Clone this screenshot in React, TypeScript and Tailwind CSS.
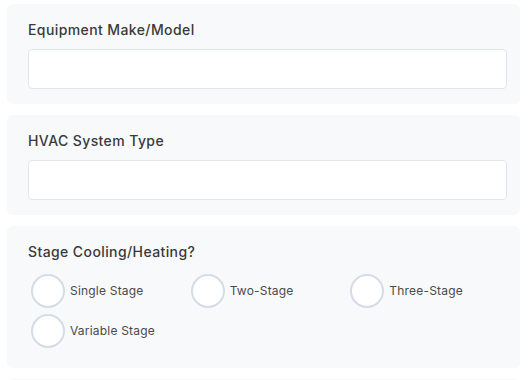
const options = ["Single Stage", "Two-Stage", "Three-Stage", "Variable Stage"];

function TextField({ label }: { label: string }) {
	return (
		<div className="rounded-md bg-[#f8f9fb] pl-[21px] pr-[13px] pt-4 pb-[15px]">
			<label className="block text-[14px] leading-5 font-medium tracking-[0.4px] text-[#3a3a3a]">{label}</label>
			<input type="text" className="mt-[9px] block h-[40px] w-full rounded bg-white border border-[#e2e6ec] outline-none" />
		</div>
	);
}

export default function App() {
	return (
		<div className="bg-white min-h-screen pt-1 pl-[7px] pr-[10px] flex flex-col gap-[11px]" style={{ fontFamily: "Inter, 'Open Sans', sans-serif" }}>
			<TextField label="Equipment Make/Model" />
			<TextField label="HVAC System Type" />
			<div className="rounded-md bg-[#f8f9fb] pl-[21px] pr-[13px] pt-4 pb-5">
				<p className="text-[14px] leading-5 font-medium tracking-[0.4px] text-[#3a3a3a]">Stage Cooling/Heating?</p>
				<div className="mt-3 grid grid-cols-3 gap-y-[6px]">
					{options.map((o) => (
						<label key={o} className="flex items-center gap-[5px] pl-[3px]">
							<span className="w-[34px] h-[34px] rounded-full bg-white border-2 border-[#d5dce6] shrink-0" />
							<span className="text-[12px] tracking-[0.2px] text-[#4a4a4a]">{o}</span>
						</label>
					))}
				</div>
			</div>
			<div className="rounded-md bg-[#f8f9fb] h-10" />
		</div>
	);
}
